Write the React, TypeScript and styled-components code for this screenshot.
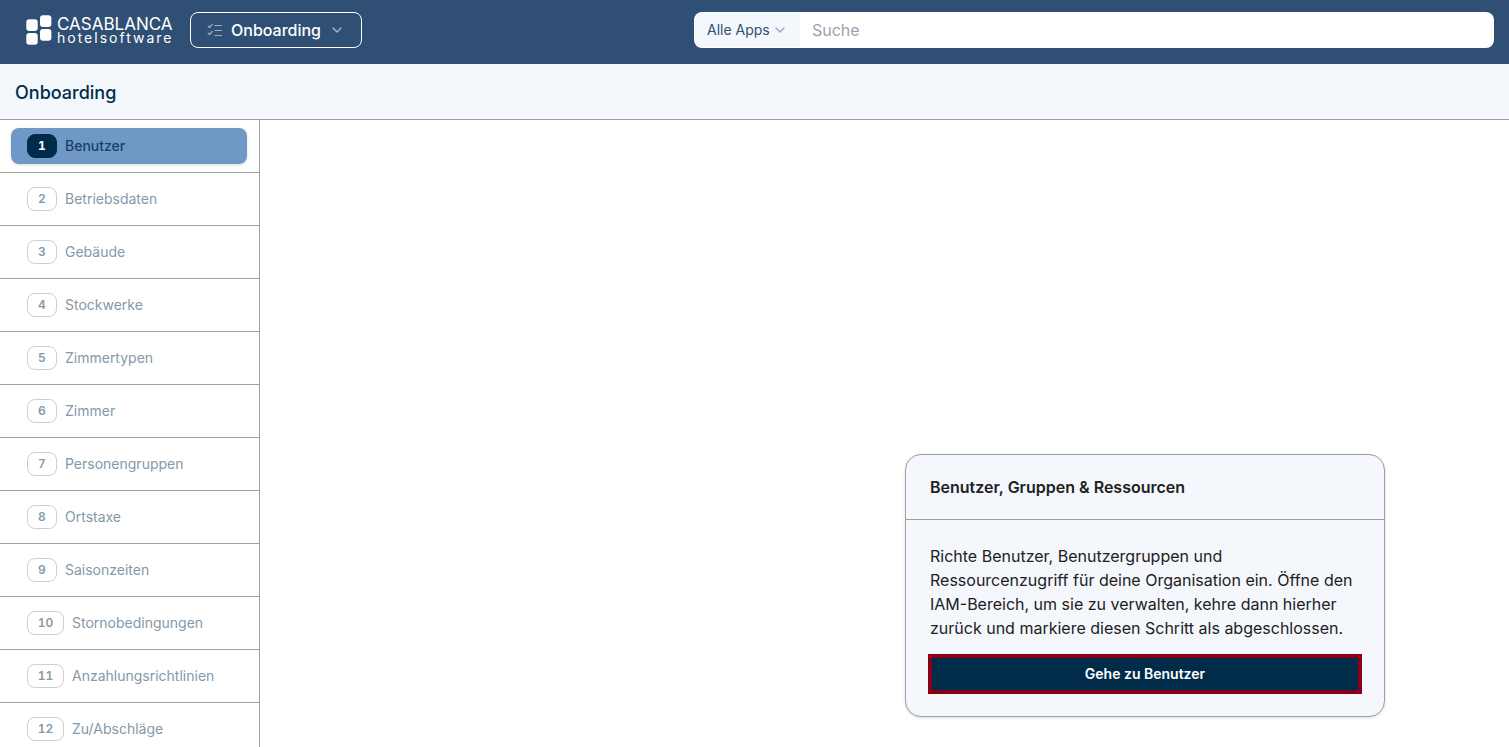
import React from "react";
import styled, { createGlobalStyle } from "styled-components";

const GlobalStyle = createGlobalStyle`
  *, *::before, *::after { box-sizing: border-box; }
  body { margin: 0; background: #ffffff; }
  body, button, input, select { font-family: Inter, "Liberation Sans", sans-serif; }
  h1, h2, p, ol { margin: 0; padding: 0; }
`;

const Page = styled.div`
  display: flex;
  flex-direction: column;
  height: 100vh;
`;

const TopBar = styled.header`
  display: flex;
  align-items: center;
  flex: none;
  height: 64px;
  padding: 0 15px 4px 26px;
  background: #304f74;
`;

const Brand = styled.a`
  display: flex;
  align-items: center;
  flex: none;
  gap: 5px;
  width: 146px;
  margin-right: 18px;
  color: #ffffff;
  text-decoration: none;
  white-space: nowrap;

  > svg { flex: none; }
`;

const BrandText = styled.span`
  display: flex;
  flex-direction: column;
  padding-top: 2px;
`;

const BrandName = styled.span`
  font-size: 17px;
  line-height: 14px;
`;

const BrandTag = styled.span`
  font-size: 14px;
  line-height: 14px;
  letter-spacing: 2px;
`;

const AppButton = styled.button`
  display: flex;
  align-items: center;
  height: 36px;
  padding: 0 19px 0 16px;
  border: 1px solid #ffffff;
  border-radius: 8px;
  background: transparent;
  color: #ffffff;
  font-size: 16px;
  font-weight: 500;
  line-height: 24px;
`;

const AppName = styled.span`
  margin: 0 11px 0 8px;
`;

const Search = styled.form`
  display: flex;
  flex: 0 1 800px;
  height: 36px;
  margin-left: auto;
  padding: 1px;
  border-radius: 8px;
  background: #ffffff;
`;

const Scope = styled.label`
  display: grid;
  align-items: center;
  flex: none;
  width: 105px;
  border-radius: 7px 0 0 7px;
  background: #f4f7fc;

  > * { grid-area: 1 / 1; }
  > svg { justify-self: end; margin-right: 15px; pointer-events: none; }
`;

const ScopeSelect = styled.select`
  appearance: none;
  width: 100%;
  height: 100%;
  padding: 0 0 2px 12px;
  border: 0;
  background: transparent;
  color: #304f74;
  font-size: 14px;
`;

const SearchInput = styled.input`
  flex: 1;
  min-width: 0;
  padding: 0 12px;
  border: 0;
  border-radius: 8px;
  background: transparent;
  color: #002c4a;
  font-size: 16px;
  &::placeholder { color: #9ca3af; }
`;

const TitleBar = styled.div`
  display: flex;
  align-items: center;
  flex: none;
  height: 56px;
  padding: 2px 15px 0;
  border-bottom: 1px solid #a0a0a0;
  background: #f4f7fc;
`;

const Title = styled.h1`
  color: #002c4a;
  font-size: 18px;
  font-weight: 500;
  line-height: 28px;
`;

const Body = styled.div`
  display: flex;
  flex: 1;
  min-height: 0;
`;

const Sidebar = styled.nav`
  flex: none;
  width: 260px;
  overflow-y: auto;
  scrollbar-width: none;
  border-right: 1px solid #a0a0a0;
`;

const StepList = styled.ol`
  list-style: none;
`;

const StepRow = styled.li`
  padding: 8px 12px 8px 11px;
  border-bottom: 1px solid #a0a0a0;
`;

const StepButton = styled.button<{ $active: boolean }>`
  display: flex;
  align-items: center;
  gap: 8px;
  width: 100%;
  height: 36px;
  padding: 0 16px;
  border: 0;
  border-radius: 8px;
  background: ${(p) => (p.$active ? "#6f98c6" : "transparent")};
  box-shadow: ${(p) => (p.$active ? "0 1px 3px rgba(0, 0, 0, 0.15)" : "none")};
  color: ${(p) => (p.$active ? "#1a3f6b" : "#8499a9")};
  font-size: 14px;
  font-weight: ${(p) => (p.$active ? 500 : 400)};
  line-height: 20px;
  white-space: nowrap;
`;

const StepNumber = styled.span<{ $active: boolean; $wide: boolean }>`
  display: flex;
  align-items: center;
  justify-content: center;
  height: 24px;
  width: ${(p) => (p.$wide ? "37px" : "30px")};
  border: 1px solid ${(p) => (p.$active ? "#002c4a" : "#cfcfcf")};
  border-radius: 8px;
  background: ${(p) => (p.$active ? "#002c4a" : "#ffffff")};
  color: ${(p) => (p.$active ? "#ffffff" : "#8499a9")};
  font-size: 12px;
  font-weight: ${(p) => (p.$active ? 700 : 600)};
  font-variant-numeric: tabular-nums;
  line-height: 16px;
`;

const Content = styled.main`
  display: flex;
  flex: 1;
  align-items: flex-end;
  justify-content: flex-end;
  min-width: 0;
  padding: 0 124px 30px 24px;
`;

const Card = styled.section`
  width: 480px;
  border: 1px solid #a0a0a0;
  border-radius: 16px;
  background: #f4f7fc;
  box-shadow: 0 1px 3px rgba(0, 0, 0, 0.15);
`;

const CardHeader = styled.div`
  padding: 20px 24px;
  border-bottom: 1px solid #a0a0a0;
`;

const CardTitle = styled.h2`
  color: #212121;
  font-size: 16px;
  font-weight: 600;
  line-height: 24px;
`;

const CardBody = styled.div`
  display: flex;
  flex-direction: column;
  gap: 14px;
  padding: 24px 22px 22px;
`;

const CardText = styled.p`
  padding: 0 2px;
  color: #212121;
  font-size: 16px;
  line-height: 24px;
`;

const PrimaryButton = styled.button`
  height: 40px;
  padding: 0 16px 2px;
  border: 4px solid #870018;
  background: #002c4a;
  color: #ffffff;
  font-size: 14px;
  font-weight: 600;
`;

const Chevron = ({ color }: { color: string }) => (
  <svg width="10" height="6" viewBox="0 0 10 6" fill="none" stroke={color} strokeWidth="1.3" strokeLinecap="round" strokeLinejoin="round" aria-hidden="true">
    <path d="M1 1l4 4 4-4" />
  </svg>
);

const LogoMark = () => (
  <svg width="26" height="30" viewBox="0 0 26 30" fill="#ffffff" aria-hidden="true">
    <rect x="0.3" y="4.3" width="11.4" height="11.7" rx="3" />
    <rect x="14" y="0.3" width="11.4" height="11.7" rx="3" />
    <rect x="0.3" y="18" width="11.4" height="11.7" rx="3" />
    <rect x="14" y="14" width="11.4" height="11.7" rx="3" />
  </svg>
);

const ChecklistIcon = () => (
  <svg width="16" height="14" viewBox="0 0 16 14" fill="none" stroke="#9fb0bf" strokeWidth="1.2" strokeLinecap="round" strokeLinejoin="round" aria-hidden="true">
    <path d="M1.2 3.2l1.4 1.3L5.2 1.4M1.2 10.2l1.4 1.3 2.6-3.1M8 2.5h6.5M8 7.5h6.5M8 12.5h6.5" />
  </svg>
);

const steps = [
  "Benutzer",
  "Betriebsdaten",
  "Gebäude",
  "Stockwerke",
  "Zimmertypen",
  "Zimmer",
  "Personengruppen",
  "Ortstaxe",
  "Saisonzeiten",
  "Stornobedingungen",
  "Anzahlungsrichtlinien",
  "Zu/Abschläge",
];

export default function App() {
  const [active, setActive] = React.useState(0);

  return (
    <Page>
      <GlobalStyle />
      <TopBar>
        <Brand href="#">
          <LogoMark />
          <BrandText>
            <BrandName>CASABLANCA</BrandName>
            <BrandTag>hotelsoftware</BrandTag>
          </BrandText>
        </Brand>
        <AppButton type="button">
          <ChecklistIcon />
          <AppName>Onboarding</AppName>
          <Chevron color="#a9b8c6" />
        </AppButton>
        <Search role="search" onSubmit={(e) => e.preventDefault()}>
          <Scope>
            <ScopeSelect aria-label="Apps">
              <option>Alle Apps</option>
            </ScopeSelect>
            <Chevron color="#93a3b8" />
          </Scope>
          <SearchInput type="text" placeholder="Suche" aria-label="Suche" />
        </Search>
      </TopBar>
      <TitleBar>
        <Title>Onboarding</Title>
      </TitleBar>
      <Body>
        <Sidebar>
          <StepList>
            {steps.map((name, i) => (
              <StepRow key={name}>
                <StepButton type="button" $active={i === active} onClick={() => setActive(i)}>
                  <StepNumber $active={i === active} $wide={i >= 9}>
                    {i + 1}
                  </StepNumber>
                  <span>{name}</span>
                </StepButton>
              </StepRow>
            ))}
          </StepList>
        </Sidebar>
        <Content>
          <Card>
            <CardHeader>
              <CardTitle>Benutzer, Gruppen &amp; Ressourcen</CardTitle>
            </CardHeader>
            <CardBody>
              <CardText>
                Richte Benutzer, Benutzergruppen und Ressourcenzugriff für deine Organisation ein. Öffne den
                IAM-Bereich, um sie zu verwalten, kehre dann hierher zurück und markiere diesen Schritt als
                abgeschlossen.
              </CardText>
              <PrimaryButton type="button">Gehe zu Benutzer</PrimaryButton>
            </CardBody>
          </Card>
        </Content>
      </Body>
    </Page>
  );
}
